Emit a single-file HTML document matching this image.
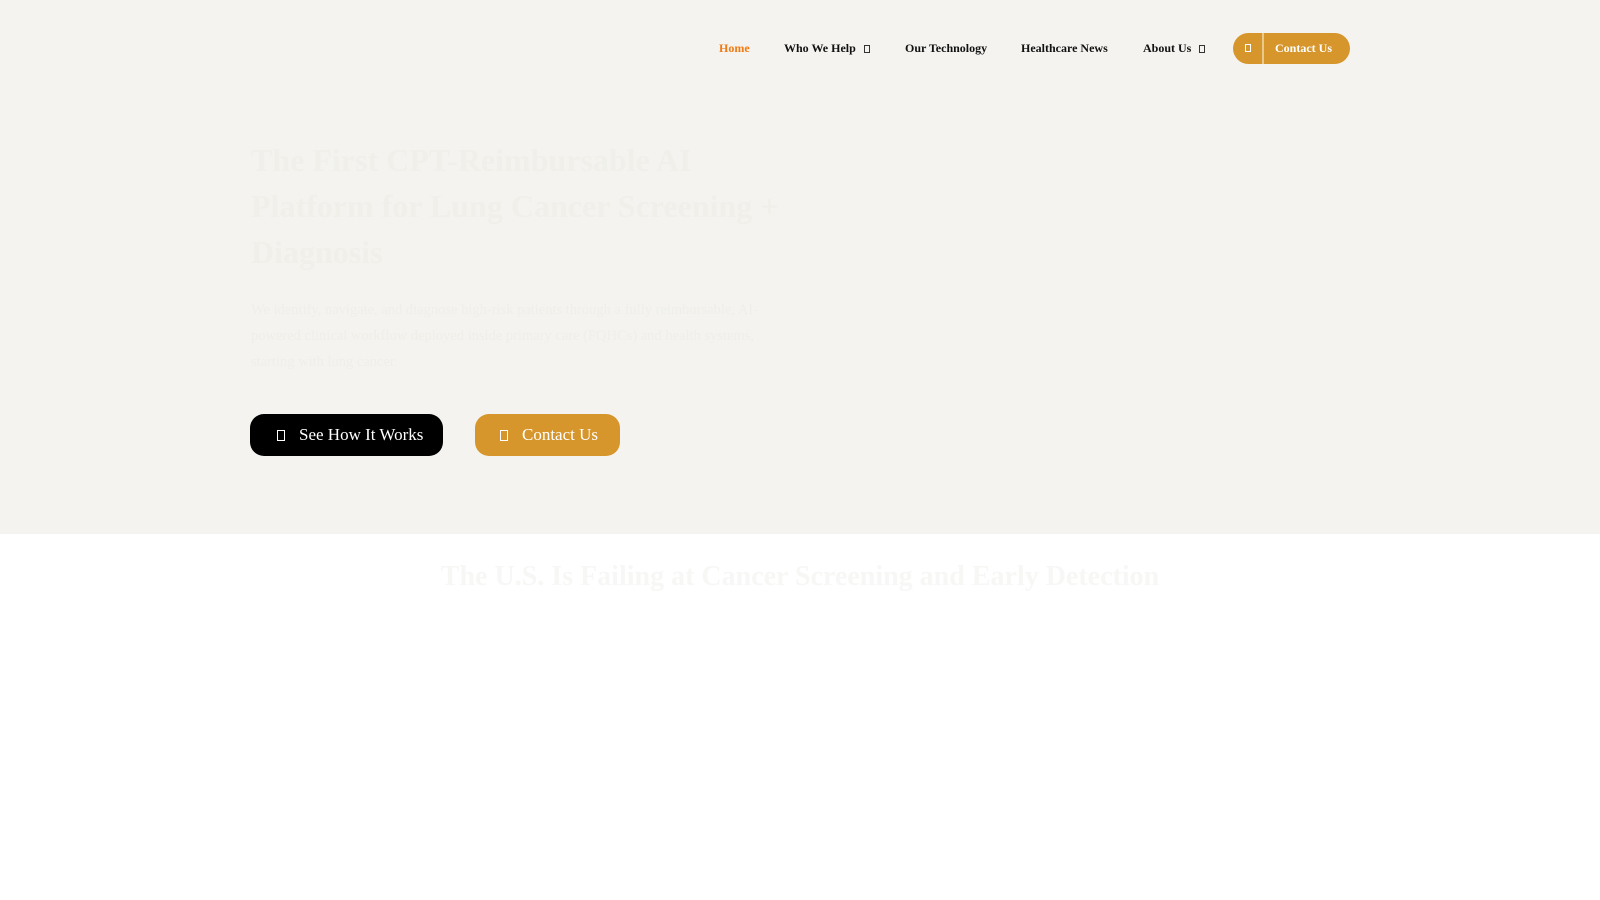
<!DOCTYPE html>
<html><head><meta charset="utf-8"><style>
*{margin:0;padding:0;box-sizing:border-box}
body{width:1600px;height:900px;background:#fff;font-family:"Liberation Serif",serif;overflow:hidden;position:relative}
.hero{position:absolute;left:0;top:0;width:1600px;height:534px;background:#f4f3ef}
.nav a{position:absolute;top:40px;font-size:12px;font-weight:bold;color:#111;text-decoration:none;white-space:nowrap;line-height:16px}
.box{display:inline-block;width:6px;height:8px;border:1px solid #333;margin-left:8px;vertical-align:-1px}
.cbtn{position:absolute;left:1233px;top:33px;width:117px;height:31px;border-radius:16px;background:#d6962b;color:#fff;font-size:12px;font-weight:bold}
.cbtn .sep{position:absolute;left:29px;top:0;width:2px;height:31px;background:#e9c98d}
.cbtn .ic{position:absolute;left:12px;top:11px;width:6px;height:8px;border:1px solid #fff}
.cbtn span.t{position:absolute;left:42px;top:8px}
h1{position:absolute;left:251px;top:137px;width:540px;font-size:32px;line-height:46px;font-weight:bold;color:#f0efea}
p.lead{position:absolute;left:251px;top:297px;width:520px;font-size:14.5px;line-height:26px;color:#efeee9}
.b{position:absolute;top:414px;height:42px;border-radius:14px;color:#fff;font-size:17px;line-height:42px}
.b .ic{display:inline-block;width:8px;height:11px;border:1px solid #fff;margin-right:14px;vertical-align:-1px}
h2{position:absolute;left:0;width:1600px;top:561px;text-align:center;font-size:28px;font-weight:bold;color:#f7f7f5}
</style></head><body>
<div class="hero"></div>
<div class="nav">
<a style="left:719px;color:#f07a14">Home</a>
<a style="left:784px">Who We Help<span class="box"></span></a>
<a style="left:905px">Our Technology</a>
<a style="left:1021px">Healthcare News</a>
<a style="left:1143px">About Us<span class="box"></span></a>
</div>
<div class="cbtn"><div class="ic"></div><div class="sep"></div><span class="t">Contact Us</span></div>
<h1>The First CPT-Reimbursable AI Platform for Lung Cancer Screening + Diagnosis</h1>
<p class="lead">We identify, navigate, and diagnose high-risk patients through a fully reimbursable, AI-powered clinical workflow deployed inside primary care (FQHCs) and health systems, starting with lung cancer.</p>
<div class="b" style="left:250px;width:193px;background:#000;padding-left:27px"><span class="ic"></span>See How It Works</div>
<div class="b" style="left:475px;width:145px;background:#d6962b;padding-left:25px"><span class="ic"></span>Contact Us</div>
<h2>The U.S. Is Failing at Cancer Screening and Early Detection</h2>
</body></html>
